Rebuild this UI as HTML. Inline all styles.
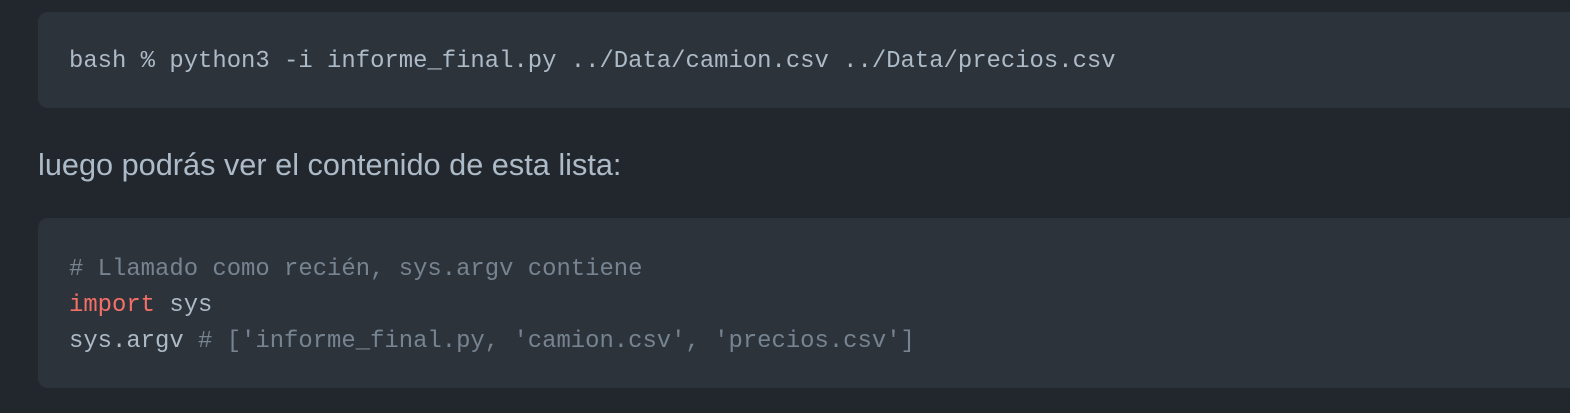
<!DOCTYPE html>
<html><head><style>
html,body{margin:0;padding:0;background:#22272e;width:1570px;height:413px;overflow:hidden}
.pre{position:absolute;left:38px;width:1560px;background:#2d333b;border-radius:10px;font-family:"Liberation Mono",monospace;font-size:23.9px;color:#adbac7;white-space:pre}
.pre div{position:absolute;left:31px;line-height:36px}
.c{color:#768390}.k{color:#f47067}
p{position:absolute;left:38px;top:146px;margin:0;font-family:"Liberation Sans",sans-serif;font-size:30.7px;color:#adbac7;line-height:38px}
</style></head><body>
<div class="pre" style="top:12px;height:96px"><div style="top:32px">bash % python3 -i informe_final.py ../Data/camion.csv ../Data/precios.csv</div></div>
<p>luego podrás ver el contenido de esta lista:</p>
<div class="pre" style="top:218px;height:170px"><div style="top:34px"><span class="c"># Llamado como recién, sys.argv contiene</span>
<span class="k">import</span> sys
sys.argv <span class="c"># ['informe_final.py, 'camion.csv', 'precios.csv']</span></div></div>
</body></html>
